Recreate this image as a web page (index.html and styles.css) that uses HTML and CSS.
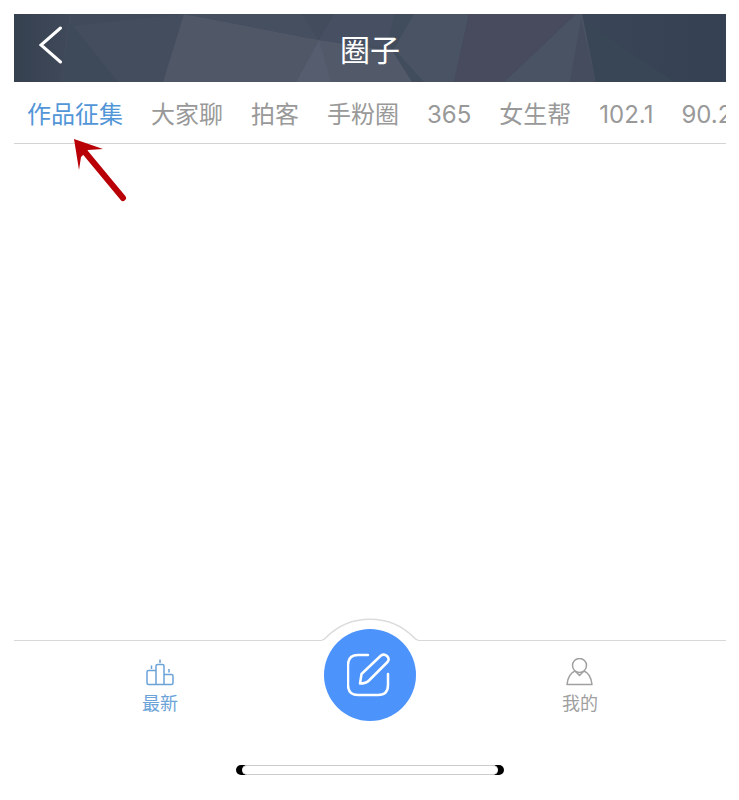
FILE: index.html
```html
<!DOCTYPE html>
<html lang="zh-CN">
<head>
    <meta charset="UTF-8">
    <meta name="viewport" content="width=device-width, initial-scale=1.0">
    <title>圈子</title>
    <link rel="stylesheet" href="styles.css">
</head>
<body>
    <div class="app">
        <header class="header">
            <svg class="header-bg" viewBox="0 0 712 68" preserveAspectRatio="none" aria-hidden="true">
                <defs>
                    <linearGradient id="header-left" x1="0" x2="1">
                        <stop offset="0" stop-color="#364150"/>
                        <stop offset="1" stop-color="#3f4959"/>
                    </linearGradient>
                    <linearGradient id="header-right" x1="0" x2="1">
                        <stop offset="0" stop-color="#3a4657"/>
                        <stop offset="1" stop-color="#354152"/>
                    </linearGradient>
                </defs>
                <rect width="712" height="68" fill="#434d5e"/>
                <polygon points="0,0 56,0 46,68 0,68" fill="url(#header-left)"/>
                <polygon points="56,8 104,68 46,68" fill="#3e4959"/>
                <polygon points="56,0 170,0 58,12" fill="#404a5b"/>
                <polygon points="170,0 305,26 282,68 149,68" fill="#505767"/>
                <polygon points="170,0 288,0 305,26" fill="#454f60"/>
                <polygon points="288,0 320,0 305,26" fill="#424c5d"/>
                <polygon points="305,26 384,38 398,68 282,68" fill="#525969"/>
                <polygon points="305,26 317,68 282,68" fill="#565d6e"/>
                <polygon points="320,0 380,0 376,34 305,26" fill="#475062"/>
                <polygon points="380,0 400,0 380,35 410,68 398,68 374,30" fill="#414d5d"/>
                <polygon points="400,0 455,0 440,68 410,68 380,35" fill="#495363"/>
                <polygon points="455,0 562,0 490,68 440,68" fill="#474b5d"/>
                <polygon points="562,0 572,0 582,68 490,68" fill="#495364"/>
                <polygon points="567,4 582,68 556,68" fill="#454c5e"/>
                <polygon points="568,0 712,0 712,68 582,68" fill="url(#header-right)"/>
                <polygon points="572,8 660,68 582,68" fill="#384655"/>
            </svg>
            <button class="back" type="button" aria-label="返回">
                <svg width="24" height="38" viewBox="0 0 24 38" aria-hidden="true">
                    <path d="M21.500 2L2 19L21.500 36" fill="none" stroke="#fff" stroke-width="3" stroke-linecap="round"/>
                </svg>
            </button>
            <h1 class="title">圈子</h1>
        </header>

        <div class="tabs-wrap">
            <nav class="tabs">
                <a class="tab active" href="#">作品征集</a>
                <a class="tab" href="#">大家聊</a>
                <a class="tab" href="#">拍客</a>
                <a class="tab" href="#">手粉圈</a>
                <a class="tab" href="#">365</a>
                <a class="tab" href="#">女生帮</a>
                <a class="tab" href="#">102.1</a>
                <a class="tab" href="#">90.2</a>
            </nav>
            <!-- Arrow pointing at the first tab -->
            <svg class="pointer" width="54" height="66" viewBox="0 0 54 66" aria-hidden="true">
                <path d="M10 12L49 59" stroke="#b80006" stroke-width="6" stroke-linecap="round"/>
                <path d="M0 0L29 10L14 11L7 18L5 31Z" fill="#b80006"/>
            </svg>
        </div>

        <main class="content"></main>

        <nav class="bottom-nav">
            <a class="nav-item current" href="#">
                <svg width="28" height="28" viewBox="0 0 28 28" fill="none" stroke="currentColor" stroke-width="1.500" stroke-linejoin="round" aria-hidden="true">
                    <path d="M10 26.500H2.500Q1 26.500 1 25V14Q1 12.500 2.500 12.500H10M10 26.500V8Q10 6.500 11.500 6.500H16.500Q18 6.500 18 8V26.500ZM18 16.500H25.500Q27 16.500 27 18V25Q27 26.500 25.500 26.500H18"/>
                    <path d="M5.500 7.500V11M14 1.500V5M23 11V14.500"/>
                </svg>
                <span>最新</span>
            </a>
            <div class="compose-slot">
                <svg class="bump" width="96" height="24" viewBox="0 0 96 24" aria-hidden="true">
                    <path d="M0 22Q2 22 4 19.500C28-5 68-5 92 19.500Q94 22 96 22V24H0Z" fill="#fff"/>
                    <path d="M0 22Q2 22 4 19.500C28-5 68-5 92 19.500Q94 22 96 22" fill="none" stroke="#dcdcdc" stroke-width="1.500"/>
                </svg>
                <button class="compose" type="button" aria-label="发布">
                    <svg width="46" height="46" viewBox="0 0 46 46" fill="none" stroke="#fff" stroke-width="2.500" stroke-linecap="round" stroke-linejoin="round" aria-hidden="true">
                        <path d="M21 3H11Q1 3 1 13V33Q1 43 11 43H31Q41 43 41 33V22"/>
                        <path d="M13 31.500L14.500 22L34 3.500Q37 1.500 40 4Q43 7 40.500 10L22 28.500Q19 31.500 13 31.500Z"/>
                    </svg>
                </button>
            </div>
            <a class="nav-item" href="#">
                <svg width="28" height="28" viewBox="0 0 28 28" fill="none" stroke="currentColor" stroke-width="1.500" stroke-linejoin="round" aria-hidden="true">
                    <circle cx="13.500" cy="7.500" r="7"/>
                    <path d="M9 13Q2 16 1 26.500H26Q25 16 18 13M9.500 13.500L13.500 17.500L17.500 13.500"/>
                </svg>
                <span>我的</span>
            </a>
        </nav>

        <div class="home-bar"><div class="home-bar-inner"></div></div>
    </div>
</body>
</html>
```

FILE: styles.css
```css
* {
    box-sizing: border-box;
}

body {
    margin: 0;
    background-color: #fff;
    font-family: Inter, "Noto Sans CJK SC", sans-serif;
}

.app {
    display: flex;
    flex-direction: column;
    min-height: 100vh;
    padding: 14px 13px 25px 14px;
}

.header {
    position: relative;
    display: grid;
    grid-template-columns: 72px 1fr 72px;
    align-items: center;
    height: 68px;
    background-color: #434d5e;
}

.header-bg {
    position: absolute;
    top: 0;
    left: 0;
    width: 100%;
    height: 100%;
}

.back {
    position: relative;
    display: flex;
    padding: 0 0 6px 25px;
    border: none;
    background: none;
    cursor: pointer;
}

.title {
    position: relative;
    margin: 0;
    padding-top: 3px;
    color: #fff;
    font-size: 30px;
    font-weight: 400;
    line-height: 44px;
    text-align: center;
}

.tabs-wrap {
    position: relative;
}

.tabs {
    display: flex;
    gap: 28px;
    height: 62px;
    padding-left: 13px;
    overflow: hidden;
    border-bottom: 1px solid #d4d4d4;
}

.tab {
    flex: none;
    color: #999;
    font-size: 24px;
    line-height: 66px;
    text-decoration: none;
}

.tab.active {
    color: #5296d8;
}

.pointer {
    position: absolute;
    top: 57px;
    left: 60px;
}

.content {
    flex: 1;
}

.bottom-nav {
    display: grid;
    grid-template-columns: repeat(3, 1fr);
    padding: 0 41px;
    border-top: 1px solid #d8d8d8;
}

.nav-item {
    display: flex;
    flex-direction: column;
    align-items: center;
    gap: 6px;
    padding-top: 17px;
    color: #a0a0a0;
    font-size: 18px;
    line-height: 24px;
    text-decoration: none;
}

.nav-item.current {
    color: #6ba3d9;
}

.compose-slot {
    position: relative;
    display: flex;
    justify-content: center;
    height: 124px;
}

/* Raised outline above the round button */
.bump {
    position: absolute;
    top: -23px;
    left: 50%;
    transform: translateX(-50%);
}

.compose {
    position: absolute;
    top: -12px;
    display: flex;
    align-items: center;
    justify-content: center;
    width: 92px;
    height: 92px;
    padding: 0;
    border: none;
    border-radius: 50%;
    background-color: #4c93fc;
    cursor: pointer;
}

.home-bar {
    align-self: center;
    width: 268px;
    height: 10px;
    padding: 0 6px;
    border-radius: 5px;
    background-color: #000;
}

.home-bar-inner {
    height: 10px;
    border: 1px solid #ccc;
    border-width: 1px 0;
    border-radius: 5px;
    background-color: #fff;
}
```
